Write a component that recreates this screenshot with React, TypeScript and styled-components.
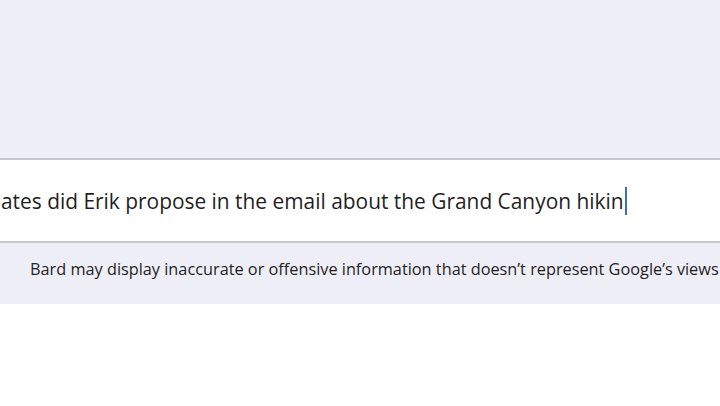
import React from "react";
import styled, { createGlobalStyle } from "styled-components";

const GlobalStyle = createGlobalStyle`
  html, body {
    margin: 0;
    padding: 0;
    background: #ffffff;
    font-family: "Open Sans", "Noto Sans", sans-serif;
  }
`;

const Page = styled.div`
  width: 720px;
  height: 406px;
  overflow: hidden;
  display: flex;
  flex-direction: column;
  background: #ffffff;
`;

const ChatArea = styled.div`
  height: 158px;
  background: #eeeef6;
`;

const InputBox = styled.div`
  height: 81px;
  background: #ffffff;
  border-top: 2px solid #c6c6cc;
  border-bottom: 2px solid #c6c6cc;
  display: flex;
  align-items: center;
  overflow: hidden;
`;

const Typed = styled.div`
  display: flex;
  align-items: center;
  white-space: nowrap;
  font-size: 20.9px;
  color: #1f1f1f;
  padding-left: 1px;
  margin-top: 1px;
`;

const Caret = styled.span`
  display: inline-block;
  width: 2px;
  height: 28px;
  background: #3b6fc4;
  margin-left: 1px;
`;

const Disclaimer = styled.div`
  height: 61px;
  box-sizing: border-box;
  background: #eeeef6;
  display: flex;
  align-items: center;
  padding-left: 30px;
  padding-bottom: 10px;
  white-space: nowrap;
  overflow: hidden;
  font-size: 16.3px;
  color: #1f1f1f;
`;

export default function App() {
  return (
    <Page>
      <GlobalStyle />
      <ChatArea />
      <InputBox>
        <Typed>
          ates did Erik propose in the email about the Grand Canyon hikin
          <Caret />
        </Typed>
      </InputBox>
      <Disclaimer>
        Bard may display inaccurate or offensive information that doesn’t represent Google’s views
      </Disclaimer>
    </Page>
  );
}
